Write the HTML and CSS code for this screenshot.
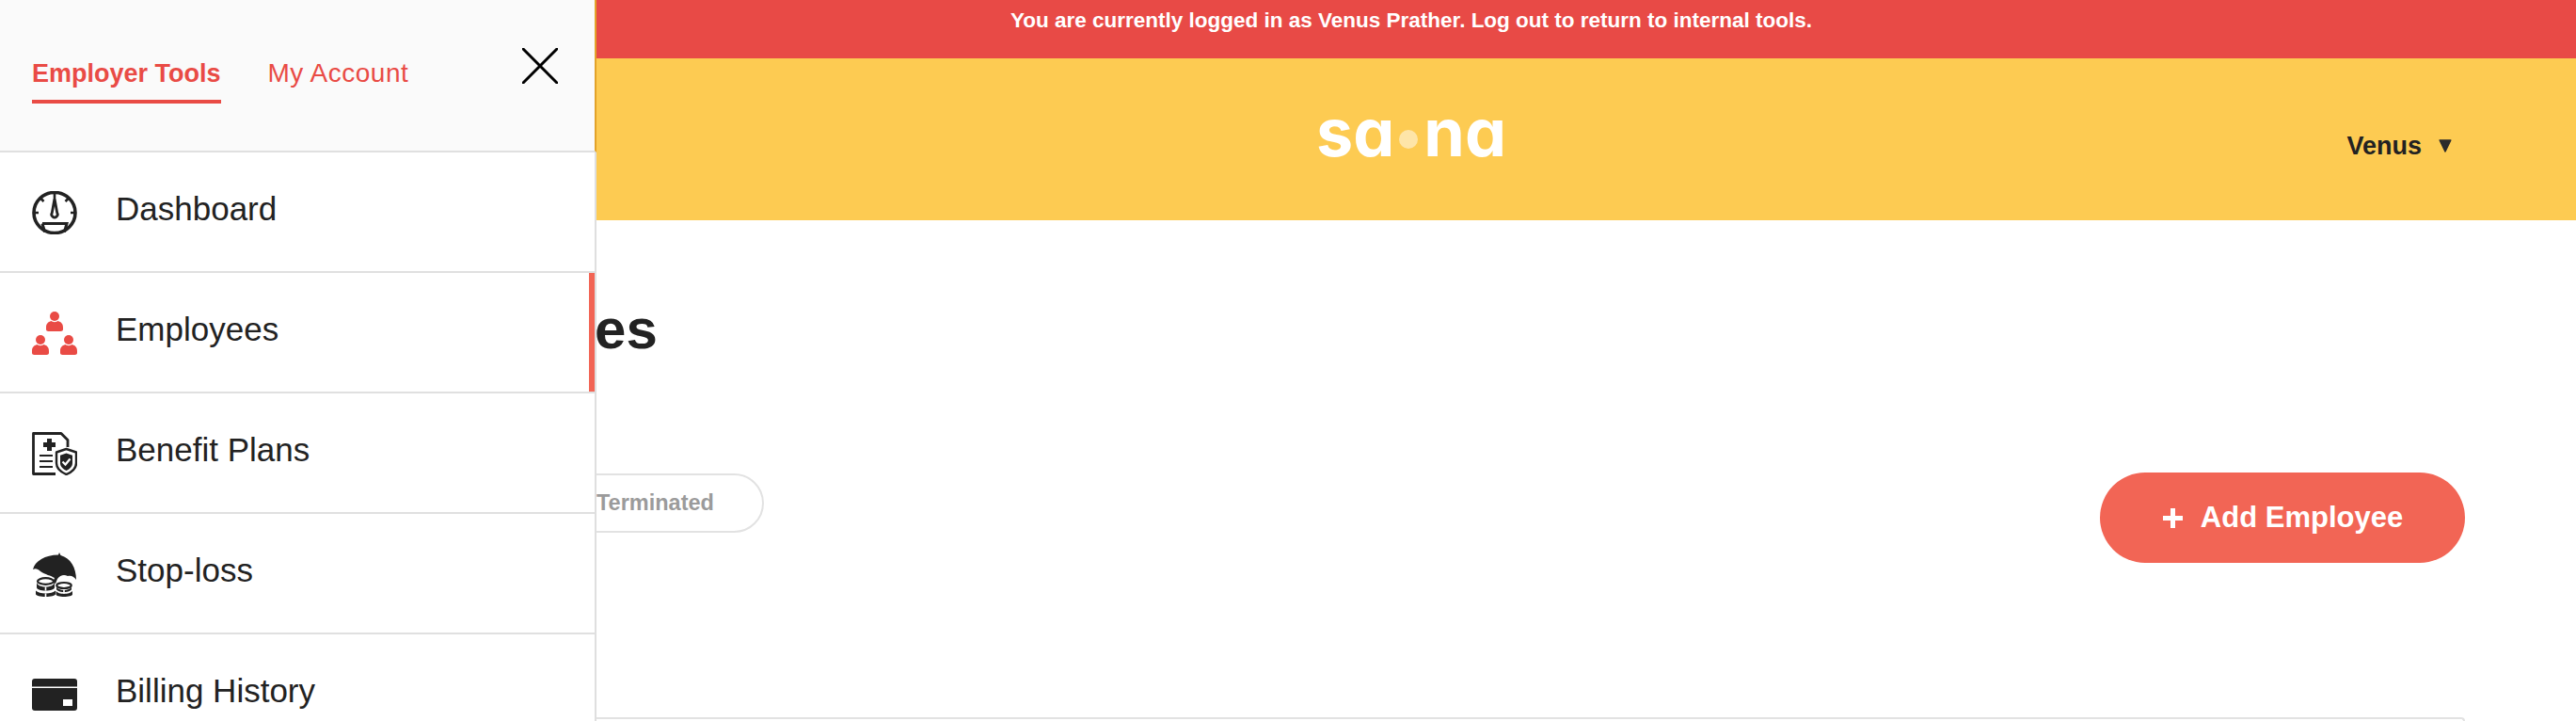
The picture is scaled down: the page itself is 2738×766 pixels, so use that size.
FILE: index.html
```html
<!DOCTYPE html>
<html lang="en">
<head>
    <meta charset="UTF-8">
    <meta name="viewport" content="width=device-width, initial-scale=1.0">
    <title>Employees</title>
    <link rel="stylesheet" href="styles.css">
</head>
<body>

<div class="page">
    <div class="notice">You are currently logged in as Venus Prather. Log out to return to internal tools.</div>

    <header class="topbar">
        <div class="logo">sa<span class="logo-dot"></span>na</div>
        <div class="user-menu">
            <span>Venus</span>
            <svg class="user-caret" viewBox="0 0 14 14"><path d="M1.2 1h11.6L7 13z" stroke="#2b2b2b" stroke-width="1.5" stroke-linejoin="round" fill="#2b2b2b"/></svg>
        </div>
    </header>

    <main class="content">
        <h1 class="page-title">Employees</h1>
        <div class="toolbar">
            <div class="filter-pill">Terminated</div>
            <button class="add-btn"><span class="add-plus"></span>Add Employee</button>
        </div>
        <div class="table-card"></div>
    </main>
</div>

<aside class="sidebar">
    <div class="sidebar-head">
        <div class="sidebar-tabs">
            <a class="sidebar-tab active">Employer Tools</a>
            <a class="sidebar-tab">My Account</a>
        </div>
        <svg class="close-icon" viewBox="0 0 38 38"><path d="M1 1l36 36M37 1L1 37" stroke="#000" stroke-width="3" stroke-linecap="round"/></svg>
    </div>

    <nav class="side-nav">
        <a class="side-item">
            <svg class="side-icon" viewBox="0 0 48 46" fill="none" stroke="#222">
                <ellipse cx="24" cy="23" rx="22" ry="21.500" stroke-width="3.600"/>
                <path d="M24 2v5M9.500 8l3 3M38.500 8l-3 3M2 23h5M41 23h5" stroke-width="2.600"/>
                <path d="M24 8l2.700 15a3.200 3.200 0 1 1-5.400 0z" stroke-width="2.800" stroke-linejoin="round"/>
                <path d="M11 34.500h26l-2.500 9M11 34.500l2.500 9" stroke-width="3"/>
            </svg>
            <span class="side-label">Dashboard</span>
        </a>
        <a class="side-item current">
            <svg class="side-icon" viewBox="0 0 48 46" fill="#e94b45">
                <g id="person">
                    <path d="M15 17c0-4 2-6 5.500-7 1.500 1.500 5.500 1.500 7 0 3.500 1 5.500 3 5.500 7v2c0 1.200-1 2-2.500 2h-13c-1.500 0-2.500-.8-2.500-2z"/>
                    <circle cx="24" cy="5" r="5"/>
                </g>
                <use href="#person" x="-15" y="25"/>
                <use href="#person" x="15" y="25"/>
            </svg>
            <span class="side-label">Employees</span>
        </a>
        <a class="side-item">
            <svg class="side-icon" viewBox="0 0 48 46" fill="none" stroke="#222">
                <path d="M25 44.500H1.500v-43H31l7 7V16" stroke-width="2.800" stroke-linejoin="round"/>
                <path d="M16 7h5v4h4v5h-4v4h-5v-4h-4v-5h4z" fill="#222" stroke="none"/>
                <path d="M8 25h14M8 31h14M8 37h14" stroke-width="2.200"/>
                <path d="M36.500 18l10.500 3.500V33c0 5.500-4.500 9.500-10.500 12C30.500 42.500 26 38.500 26 33V21.500z" fill="#fff" stroke-width="2.400" stroke-linejoin="round"/>
                <path d="M36.500 22.500l6.500 2.200V33c0 3.500-2.500 6-6.500 8-4-2-6.500-4.500-6.500-8v-8.300z" fill="#222" stroke="none"/>
                <path d="M32.500 31.500l3 3 5-6" stroke="#fff" stroke-width="2.200"/>
            </svg>
            <span class="side-label">Benefit Plans</span>
        </a>
        <a class="side-item">
            <svg class="side-icon" viewBox="0 0 48 47" fill="#222">
                <path d="M29 0l1.500 3C41 6 47 16 47 29c-2-3-5-5-9-4-4-2-8-1-11 3l-2 5-3-1 2-5c-4-2.500-10-3.500-15-7C6 17.500 4 16.500 1 18 3 9 14 2.500 28 2.500z"/>
                <ellipse cx="14.500" cy="30.500" rx="8.500" ry="3.300" fill="#fff" stroke="#222" stroke-width="2.200"/>
                <path d="M5 32v5c0 2 4 3.500 9.500 3.500S24 39 24 37v-5c-1 3-5 4.500-9.500 4.500S6 35 5 32z"/>
                <path d="M4 40.500V44c0 2 5 3 10.500 3S25 46 25 44v-3.500c-2 2-6 3-10.500 3S6 42.500 4 40.500z"/>
                <ellipse cx="34" cy="35" rx="7.800" ry="3" fill="#fff" stroke="#222" stroke-width="2.200"/>
                <path d="M26 36.500V39c0 1.500 3.500 3 8 3s8-1.500 8-3v-2.500c-1 2-4 3.500-8 3.500s-7-1.500-8-3.500z"/>
                <path d="M25.500 41v3.500c0 1.500 4 2.500 8.500 2.500s9-1 9-2.500V41c-2 2-5 2.800-9 2.800s-6.500-.8-8.500-2.800z"/>
                <path d="M14.500 36.500v4M14.500 43.500v3.500M34 40v3.800" stroke="#fff" stroke-width="1.600"/>
            </svg>
            <span class="side-label">Stop-loss</span>
        </a>
        <a class="side-item">
            <svg class="side-icon" viewBox="0 0 48 34" fill="#222">
                <path d="M3 0h42a3 3 0 0 1 3 3v5.500H0V3a3 3 0 0 1 3-3z"/>
                <path d="M0 10h48v21a3 3 0 0 1-3 3H3a3 3 0 0 1-3-3z"/>
                <rect x="33" y="22" width="10" height="7" fill="#fff"/>
            </svg>
            <span class="side-label">Billing History</span>
        </a>
    </nav>
</aside>

</body>
</html>
```

FILE: styles.css
```css
* {
    box-sizing: border-box;
}
html, body {
    height: 100%;
}
body {
    margin: 0;
    background-color: #fff;
    color: #222;
    font-family: 'Liberation Sans', Arial, sans-serif;
    overflow: hidden;
}
.page {
    height: 766px;
    overflow: hidden;
}
.notice {
    height: 62px;
    padding: 0 0 18px 262px;
    display: flex;
    align-items: center;
    justify-content: center;
    background-color: #e84a46;
    color: #fff;
    font-size: 22.5px;
    font-weight: 700;
}
.topbar {
    height: 172px;
    padding: 14px 0 0 262px;
    display: grid;
    grid-template-columns: 1fr auto 1fr;
    align-items: center;
    background-color: #fdcb52;
}
.logo {
    grid-column: 2;
    margin-bottom: 28px;
    display: flex;
    align-items: center;
    color: #fff;
    font-family: 'Inter', sans-serif;
    font-feature-settings: "cv11";
    font-size: 70px;
    line-height: 70px;
    font-weight: 700;
}
.logo-dot {
    width: 20px;
    height: 20px;
    margin: 13px 6px 0 5px;
    border-radius: 50%;
    background-color: #fee5a8;
}
.user-menu {
    grid-column: 3;
    justify-self: end;
    margin-right: 132px;
    display: flex;
    align-items: center;
    gap: 18px;
    font-size: 27px;
    font-weight: 700;
    color: #222;
}
.user-caret {
    width: 14px;
    height: 14px;
    margin-top: -1px;
}
.content {
    padding: 0 118px 0 380px;
}
.page-title {
    margin: 0 0 0 2px;
    padding-top: 81px;
    font-size: 60px;
    line-height: 70px;
    font-weight: 700;
}
.toolbar {
    margin-top: 117px;
    display: flex;
    align-items: flex-start;
    justify-content: space-between;
}
.filter-pill {
    width: 432px;
    height: 63px;
    margin-top: 1px;
    padding-left: 252px;
    display: flex;
    align-items: center;
    border: 2px solid #e2e2e2;
    border-radius: 32px;
    color: #9b9b9b;
    font-size: 23.5px;
    font-weight: 700;
}
.add-btn {
    width: 388px;
    height: 96px;
    padding: 0 0 0 1px;
    display: flex;
    align-items: center;
    justify-content: center;
    gap: 19px;
    border: none;
    border-radius: 48px;
    background-color: #f26555;
    color: #fff;
    font-family: inherit;
    font-size: 31px;
    font-weight: 700;
}
.add-plus {
    width: 21px;
    height: 21px;
    background:
        linear-gradient(#fff, #fff) center / 100% 5px no-repeat,
        linear-gradient(#fff, #fff) center / 5px 100% no-repeat;
}
.table-card {
    height: 4px;
    margin: 164px 0 0 -380px;
    border: 2px solid #e2e2e2;
    border-bottom: none;
    border-radius: 12px 12px 0 0;
}
.sidebar {
    position: absolute;
    top: 0;
    left: 0;
    width: 634px;
    height: 766px;
    overflow: hidden;
    background-color: #fff;
}
.sidebar-head {
    height: 162px;
    padding: 0 39px 0 34px;
    display: flex;
    align-items: flex-start;
    justify-content: space-between;
    background-color: #fafafa;
    border-right: 2px solid #e2a32a;
    border-bottom: 2px solid #e0e0e0;
}
.sidebar-tabs {
    display: flex;
    gap: 50px;
    padding-top: 62px;
    font-size: 28px;
    line-height: 32px;
    letter-spacing: .5px;
    color: #e94b45;
}
.sidebar-tab {
    height: 48px;
}
.sidebar-tab.active {
    font-size: 27px;
    font-weight: 700;
    letter-spacing: 0;
    border-bottom: 4px solid #e94b45;
}
.close-icon {
    width: 38px;
    height: 38px;
    margin-top: 51px;
}
.side-nav {
    border-right: 2px solid #dfdfdf;
}
.side-item {
    height: 128px;
    padding: 2px 0 0 34px;
    display: flex;
    align-items: center;
    gap: 41px;
    border-bottom: 2px solid #e0e0e0;
    font-size: 35px;
    color: #222;
    position: relative;
}
.side-label {
    margin-bottom: 8px;
}
.side-item.current::after {
    content: "";
    position: absolute;
    top: 0;
    right: 0;
    bottom: 0;
    width: 6px;
    background-color: #f26555;
}
.side-icon {
    width: 48px;
    flex: none;
}
```
